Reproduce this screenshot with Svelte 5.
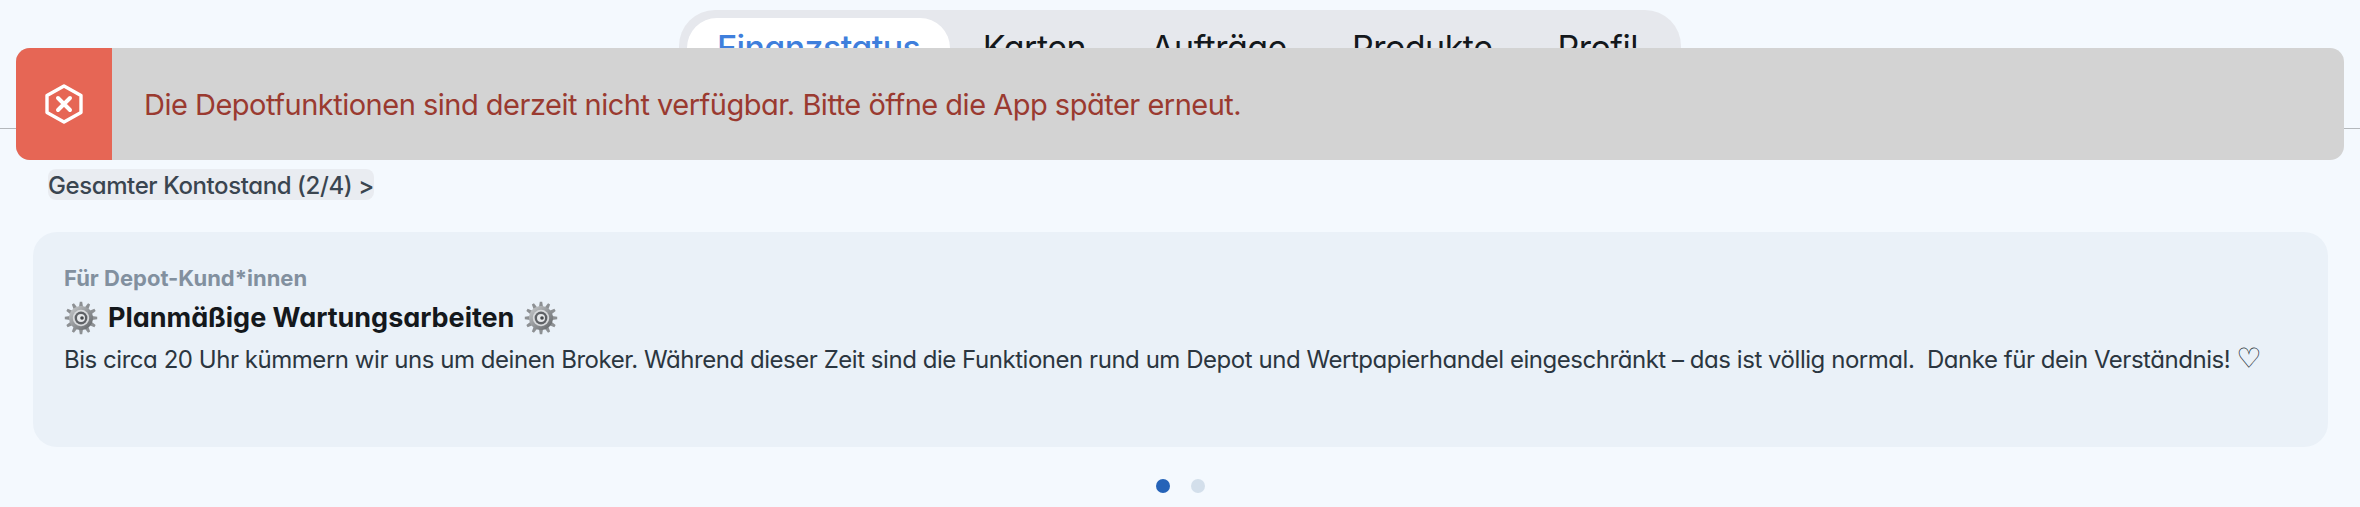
<script>
  const tabs = ['Finanzstatus', 'Karten', 'Aufträge', 'Produkte', 'Profil'];
  const teeth = Array.from({ length: 12 }, (_, i) => i * 30);
</script>

{#snippet gear()}
  <svg class="gear" viewBox="0 0 34 34" aria-hidden="true">
    <defs>
      <linearGradient id="steel" x1="0" y1="0" x2="1" y2="1">
        <stop offset="0" stop-color="#c9cbcd" />
        <stop offset="0.5" stop-color="#94979a" />
        <stop offset="1" stop-color="#5c5f62" />
      </linearGradient>
    </defs>
    {#each teeth as angle}
      <path d="M15 6 15.800 0.800h2.400L19 6Z" fill="#8d9093" transform="rotate({angle} 17 17)" />
    {/each}
    <circle cx="17" cy="17" r="12" fill="url(#steel)" />
    <circle cx="17" cy="17" r="8.200" fill="#d8dadc" />
    <circle cx="17" cy="17" r="6.400" fill="#5f6266" />
    <circle cx="17" cy="17" r="4" fill="#e6e8ea" />
    <circle cx="18" cy="17" r="1.800" fill="#45484b" />
  </svg>
{/snippet}

<div class="page">
  <header class="top">
    <nav class="tabs">
      {#each tabs as tab, i}
        <div class="tab" class:active={i === 0}>{tab}</div>
      {/each}
    </nav>
  </header>

  <section class="balance">
    <span class="balance-label">Gesamter Kontostand (2/4) &gt;</span>
  </section>

  <section class="card">
    <div class="eyebrow">Für Depot-Kund*innen</div>
    <h2 class="title">{@render gear()}<span>Planmäßige Wartungsarbeiten</span>{@render gear()}</h2>
    <p class="body">Bis circa 20 Uhr kümmern wir uns um deinen Broker. Während dieser Zeit sind die Funktionen rund um Depot und Wertpapierhandel eingeschränkt – das ist völlig normal.&nbsp; Danke für dein Verständnis! <span class="heart">♡</span></p>
  </section>

  <div class="dots">
    <span class="dot current"></span>
    <span class="dot"></span>
  </div>

  <div class="alert" role="alert">
    <div class="alert-icon">
      <svg viewBox="0 0 38 40" width="38" height="40" fill="none" stroke="#fff" aria-hidden="true">
        <path d="M19 2 36 11.500v17L19 38 2 28.500v-17Z" stroke-width="3.400" stroke-linejoin="round" />
        <path d="M13 14l12 12m0-12-12 12" stroke-width="4" stroke-linecap="round" />
      </svg>
    </div>
    <div class="alert-text">Die Depotfunktionen sind derzeit nicht verfügbar. Bitte öffne die App später erneut.</div>
  </div>
</div>

<style>
  :global(body) {
    margin: 0;
    background: #f4f9fe;
    font-family: Inter, "Liberation Sans", sans-serif;
    font-feature-settings: "cv11" 1;
  }

  .page {
    position: relative;
    height: 507px;
    overflow: hidden;
  }

  .top {
    display: flex;
    justify-content: center;
    height: 118px;
    padding-top: 10px;
    border-bottom: 1px solid #b4b8bc;
  }

  .tabs {
    display: flex;
    width: 1002px;
    box-sizing: border-box;
    padding: 8px 8px 0;
    background: #e6e8ed;
    border-radius: 36px 36px 0 0;
  }

  .tab {
    padding: 9px 32.5px 0;
    font-size: 34px;
    letter-spacing: -0.5px;
    color: #14181c;
    white-space: nowrap;
  }

  .tab.active {
    padding: 9px 30px 0;
    background: #fff;
    color: #3f7fdc;
    border-radius: 30px 30px 0 0;
    font-weight: 500;
    letter-spacing: -0.6px;
  }

  .balance {
    padding: 40px 0 0 48px;
    height: 64px;
    box-sizing: border-box;
  }

  .balance-label {
    display: inline-block;
    width: 326px;
    height: 31px;
    box-sizing: border-box;
    line-height: 33px;
    background: #e9ecf1;
    border-radius: 8px;
    font-size: 24px;
    font-weight: 500;
    letter-spacing: -0.4px;
    color: #3a4550;
    white-space: nowrap;
  }

  .card {
    margin: 39px 32px 0 33px;
    height: 215px;
    box-sizing: border-box;
    padding: 33px 31px 0;
    background: #eaf1f8;
    border-radius: 24px;
  }

  .eyebrow {
    font-size: 22px;
    line-height: 26px;
    font-weight: 700;
    color: #82909f;
    letter-spacing: 0;
  }

  .title {
    display: flex;
    align-items: center;
    gap: 10px;
    margin: 10px 0 0;
    font-size: 27px;
    line-height: 34px;
    font-weight: 700;
    letter-spacing: -0.03px;
    color: #14181c;
  }

  .gear {
    width: 34px;
    height: 34px;
    flex: none;
  }

  .body {
    margin: 8px 0 0;
    font-size: 24px;
    line-height: 34px;
    letter-spacing: -0.46px;
    color: #2b3640;
    white-space: nowrap;
  }

  .heart {
    font-family: "DejaVu Sans", sans-serif;
    font-size: 28px;
    line-height: 20px;
    font-weight: 400;
  }

  .dots {
    display: flex;
    justify-content: center;
    gap: 21px;
    margin-top: 32px;
  }

  .dot {
    width: 14px;
    height: 14px;
    border-radius: 50%;
    background: #d3dfeb;
  }

  .dot.current {
    background: #2563b8;
  }

  .alert {
    position: absolute;
    top: 48px;
    left: 16px;
    right: 16px;
    height: 112px;
    display: flex;
    background: #d3d3d3;
    border-radius: 14px;
    overflow: hidden;
  }

  .alert-icon {
    width: 96px;
    flex: none;
    display: flex;
    align-items: center;
    justify-content: center;
    background: #e66655;
  }

  .alert-text {
    display: flex;
    align-items: center;
    padding-left: 32px;
    font-size: 29px;
    letter-spacing: -0.5px;
    color: #9a3a30;
    white-space: nowrap;
  }
</style>
